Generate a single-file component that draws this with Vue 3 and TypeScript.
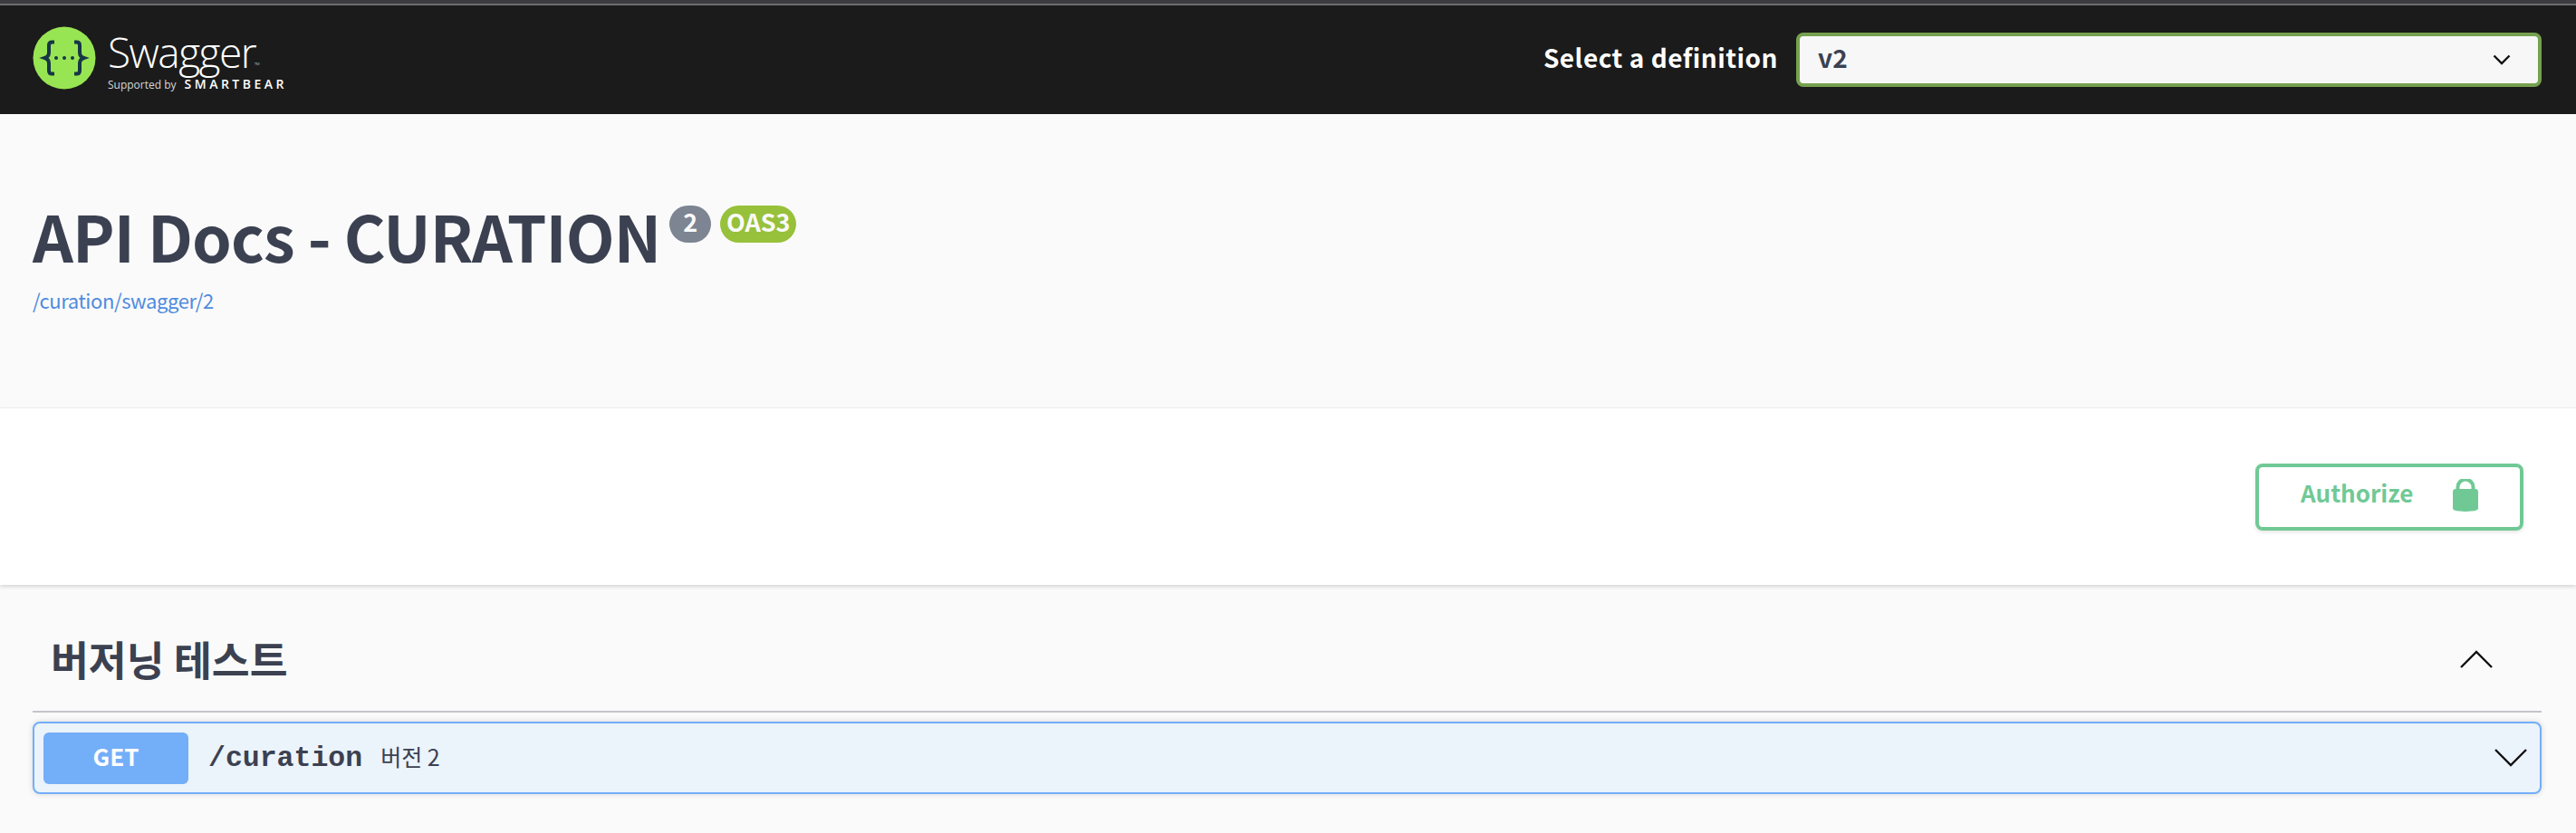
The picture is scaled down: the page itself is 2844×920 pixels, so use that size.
<script setup lang="ts">
const title = 'API Docs - CURATION'
const specUrl = '/curation/swagger/2'
</script>

<template>
  <div class="page">
    <div class="strip"></div>
    <header class="topbar">
      <div class="logo">
        <svg class="logo__mark" width="70" height="70" viewBox="0 0 70 70">
          <circle cx="35" cy="35" r="34.5" fill="#98e553" />
          <g fill="none" stroke="#173646" stroke-width="4">
            <path d="M24 17.5h-2.5c-2.5 0-3.5 1.500-3.500 3.500v8c0 3-1.500 5-4.500 6 3 1 4.500 3 4.500 6v8c0 2 1 3.500 3.500 3.500H24" />
            <path d="M46 17.500h2.500c2.500 0 3.500 1.500 3.500 3.500v8c0 3 1.500 5 4.500 6-3 1-4.500 3-4.500 6v8c0 2-1 3.500-3.500 3.500H46" />
          </g>
          <g fill="#173646">
            <circle cx="26" cy="35" r="2" />
            <circle cx="35" cy="35" r="2" />
            <circle cx="44" cy="35" r="2" />
          </g>
        </svg>
        <div class="logo__text">
          <div class="logo__name">Swagger<span class="logo__tm">TM</span></div>
          <div class="logo__sub">
            <span class="logo__by">Supported by</span>
            <span class="logo__brand">SMARTBEAR</span>
          </div>
        </div>
      </div>
      <div class="picker">
        <span class="picker__label">Select a definition</span>
        <div class="picker__box">
          <span>v2</span>
          <svg width="20" height="12" viewBox="0 0 20 12">
            <path d="M1.500 1.500l8.500 8.500 8.500-8.500" fill="none" stroke="#111" stroke-width="2.400" />
          </svg>
        </div>
      </div>
    </header>

    <section class="info">
      <div class="info__head">
        <h1 class="info__title">{{ title }}</h1>
        <span class="badge badge--ver">2</span>
        <span class="badge badge--oas">OAS3</span>
      </div>
      <a class="info__link">{{ specUrl }}</a>
    </section>

    <section class="scheme">
      <button class="auth">
        <span>Authorize</span>
        <svg width="28" height="36" viewBox="0 0 28 36">
          <path d="M5.500 13V9a8.500 8.500 0 0 1 17 0v4" fill="none" stroke="#70c995" stroke-width="4" />
          <path d="M0 14c0-2 1.500-3 3-3h22c1.500 0 3 1 3 3v18c0 1.500-.8 2.200-2 2.600-3 1-7.500 1.400-12 1.400s-9-.4-12-1.400C.8 34.200 0 33.500 0 32z" fill="#70c995" />
        </svg>
      </button>
    </section>

    <section class="ops">
      <div class="tag">
        <h3 class="tag__name">버저닝 테스트</h3>
        <svg class="tag__arrow" width="36" height="20" viewBox="0 0 36 20">
          <path d="M1 19L18 2l17 17" fill="none" stroke="#111" stroke-width="2.400" />
        </svg>
      </div>
      <div class="op">
        <span class="op__method">GET</span>
        <span class="op__path">/curation</span>
        <span class="op__summary">버전 2</span>
        <svg class="op__arrow" width="36" height="20" viewBox="0 0 36 20">
          <path d="M1 1l17 17L35 1" fill="none" stroke="#111" stroke-width="2.400" />
        </svg>
      </div>
    </section>
  </div>
</template>

<style>
html,
body {
  margin: 0;
  background: #fafafa;
}
</style>

<style scoped>
.page {
  width: 2844px;
  height: 920px;
  overflow: hidden;
  background: #fafafa;
  color: #3b4151;
  font-family: 'Noto Sans CJK KR', 'Open Sans', sans-serif;
}

.strip {
  height: 4px;
  background: #3b3b40;
  border-bottom: 2px solid #6c6c6e;
}

.topbar {
  height: 120px;
  background: #1b1b1b;
  display: flex;
  align-items: center;
  justify-content: space-between;
  padding: 0 38px 0 36px;
}

.logo {
  display: flex;
  align-items: flex-start;
  gap: 13px;
  margin-top: -1px;
}

.logo__text {
  color: #fff;
  padding-top: 3px;
  font-family: 'Open Sans', sans-serif;
}

.logo__name {
  font-size: 46px;
  font-weight: 300;
  line-height: 50px;
  letter-spacing: -1.500px;
  position: relative;
}

.logo__tm {
  position: absolute;
  left: 162px;
  top: 36px;
  font-size: 4px;
  line-height: 6px;
  letter-spacing: 0;
}

.logo__sub {
  display: flex;
  align-items: baseline;
  gap: 9px;
  margin-top: 1px;
}

.logo__by {
  font-size: 12px;
  color: #d8d8d8;
}

.logo__brand {
  font-size: 14px;
  font-weight: 600;
  letter-spacing: 3.500px;
}

.picker {
  display: flex;
  align-items: center;
  gap: 20px;
}

.picker__label {
  color: #fff;
  font-size: 28px;
  font-weight: 700;
  letter-spacing: 0.500px;
  line-height: 34px;
  margin-top: -6px;
}

.picker__box {
  box-sizing: border-box;
  width: 823px;
  height: 60px;
  border: 4px solid #75a14f;
  border-radius: 8px;
  background: #f7f7f7;
  display: flex;
  align-items: center;
  justify-content: space-between;
  padding: 0 30px 0 20px;
  font-size: 28px;
  font-weight: 700;
}

.picker__box span {
  line-height: 34px;
  margin-top: -6px;
}

.info {
  box-sizing: border-box;
  height: 325px;
  padding: 85px 36px 0;
  border-bottom: 1px solid #f1f1f1;
}

.info__head {
  display: flex;
  align-items: flex-start;
}

.info__title {
  margin: 0;
  font-size: 70px;
  line-height: 98px;
  font-weight: 700;
  letter-spacing: -0.900px;
}

.badge {
  box-sizing: border-box;
  height: 41px;
  margin-top: 16px;
  border-radius: 22px;
  color: #fafafa;
  font-size: 27px;
  font-weight: 700;
  line-height: 36px;
  text-align: center;
}

.badge--ver {
  width: 46px;
  margin-left: 10px;
  background: #7d8492;
}

.badge--oas {
  width: 84px;
  margin-left: 10px;
  background: #97c13a;
}

.info__link {
  display: block;
  margin-top: 6px;
  color: #4f8bdf;
  font-size: 22px;
  letter-spacing: -0.400px;
  line-height: 32px;
}

.scheme {
  box-sizing: border-box;
  height: 195px;
  background: #fff;
  box-shadow: 0 2px 4px rgba(0, 0, 0, 0.15);
  display: flex;
  justify-content: flex-end;
  padding: 61px 58px 0 0;
  position: relative;
}

.auth {
  box-sizing: border-box;
  width: 296px;
  height: 74px;
  border: 4px solid #70c995;
  border-radius: 8px;
  background: transparent;
  box-shadow: 0 2px 4px rgba(0, 0, 0, 0.1);
  color: #70c995;
  font-family: inherit;
  font-size: 26px;
  font-weight: 700;
  display: flex;
  align-items: center;
  justify-content: space-between;
  padding: 0 46px 4px 46px;
}

.auth span {
  margin-top: -8px;
}

.ops {
  padding: 0 38px 0 36px;
}

.tag {
  box-sizing: border-box;
  height: 141px;
  border-bottom: 2px solid #c4c5ca;
  display: flex;
  align-items: center;
  justify-content: space-between;
  padding: 22px 54px 0 20px;
}

.tag__arrow {
  margin-top: 2px;
}

.tag__name {
  margin: 0;
  font-size: 45.500px;
  font-weight: 700;
  font-family: 'Noto Sans CJK KR', sans-serif;
}

.op {
  box-sizing: border-box;
  height: 80px;
  margin-top: 10px;
  border: 2px solid #73aef8;
  border-radius: 8px;
  background: #ebf3fb;
  box-shadow: 0 0 6px rgba(0, 0, 0, 0.15);
  display: flex;
  align-items: center;
  padding: 0 14px 0 10px;
}

.op__method {
  width: 160px;
  height: 57px;
  border-radius: 6px;
  background: #73aef8;
  color: #fff;
  font-size: 26px;
  font-weight: 700;
  line-height: 52px;
  text-align: center;
}

.op__path {
  margin-left: 22px;
  font-family: 'Liberation Mono', monospace;
  font-size: 31.500px;
  font-weight: 700;
}

.op__summary {
  margin-left: 20px;
  margin-top: -5px;
  font-size: 25px;
  font-family: 'Noto Sans CJK KR', sans-serif;
}

.op__arrow {
  margin-left: auto;
}
</style>
